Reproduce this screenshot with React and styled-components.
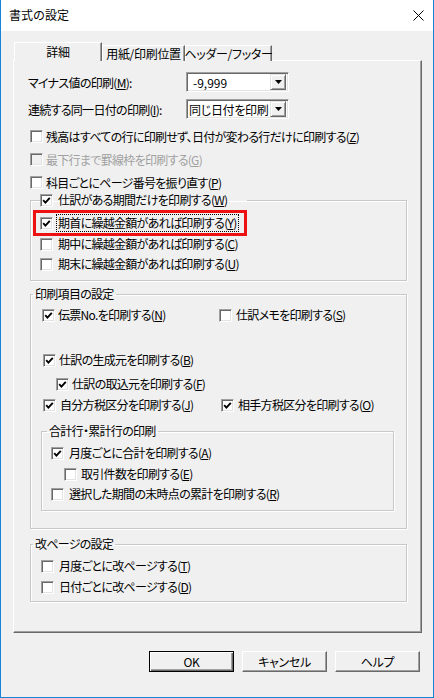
import React from "react";
import styled, { createGlobalStyle } from "styled-components";

const GlobalStyle = createGlobalStyle`
  html, body {
    margin: 0;
    padding: 0;
    background: #ffffff;
  }
  body {
    font-family: "Noto Sans CJK JP", "Noto Sans", sans-serif;
    font-size: 12px;
    color: #000;
  }
`;

const Window = styled.div`
  width: 434px;
  height: 698px;
  box-sizing: border-box;
  border: 1px solid #1883d7;
  border-top: none;
  display: flex;
  flex-direction: column;
  background: #f0f0f0;
`;

const TitleBar = styled.div`
  height: 31px;
  flex: none;
  background: #ffffff;
  display: flex;
  align-items: center;
  justify-content: space-between;
  padding: 0 8px;
`;

const Title = styled.span`
  font-size: 12px;
  line-height: 16px;
  margin-top: -1px;
`;

const CloseIcon = () => (
  <svg width="11" height="11" viewBox="0 0 11 11" style={{ marginRight: 1 }}>
    <path d="M0.5 0.5 L10.5 10.5 M10.5 0.5 L0.5 10.5" stroke="#000" strokeWidth="1" />
  </svg>
);

const Body = styled.div`
  flex: 1;
  display: flex;
  flex-direction: column;
  padding: 11px 11px 0 12px;
`;

const TabStrip = styled.div`
  display: flex;
  align-items: flex-end;
  padding-left: 1px;
  margin-bottom: -1px;
  position: relative;
  z-index: 1;
`;

const Tab = styled.div`
  box-sizing: border-box;
  width: ${(p) => p.$w}px;
  height: ${(p) => (p.$active ? 19 : 16)}px;
  background: #f0f0f0;
  border-top: 1px solid #ffffff;
  border-left: 1px solid #ffffff;
  border-right: 1px solid #696969;
  box-shadow: inset -1px 0 0 #a0a0a0;
  display: flex;
  align-items: ${(p) => (p.$active ? "flex-start" : "center")};
  justify-content: center;
  padding-top: ${(p) => (p.$active ? "1px" : "0")};
  font-size: 12px;
  line-height: 16px;
  white-space: nowrap;
  letter-spacing: -0.3px;
  font-feature-settings: "palt";
`;

const Panel = styled.div`
  flex: 1;
  box-sizing: border-box;
  border-top: 1px solid #ffffff;
  border-left: 1px solid #ffffff;
  border-right: 1px solid #696969;
  border-bottom: 1px solid #696969;
  box-shadow: inset -1px -1px 0 #a0a0a0;
  padding: 11px 14px 0 14px;
  display: flex;
  flex-direction: column;
  letter-spacing: -0.7px;
`;

const FieldRow = styled.div`
  display: flex;
  align-items: center;
  height: 20px;
  margin-top: ${(p) => p.$top || 0}px;
`;

const FieldLabel = styled.span`
  width: 158px;
  font-feature-settings: "palt";
  white-space: nowrap;
`;

const Combo = styled.div`
  box-sizing: border-box;
  width: 103px;
  height: 20px;
  background: #ffffff;
  border-top: 1px solid #a0a0a0;
  border-left: 1px solid #a0a0a0;
  border-right: 1px solid #ffffff;
  border-bottom: 1px solid #ffffff;
  box-shadow: inset 1px 1px 0 #696969, inset -1px -1px 0 #e3e3e3;
  display: flex;
  align-items: center;
  padding: 2px 2px 2px ${(p) => p.$pad}px;
`;

const ComboText = styled.span`
  flex: 1;
  white-space: nowrap;
  overflow: hidden;
  font-feature-settings: "palt";
  letter-spacing: ${(p) => (p.$num ? "0" : "-0.3px")};
`;

const ComboArrow = styled.div`
  box-sizing: border-box;
  width: 16px;
  height: 16px;
  background: #f0f0f0;
  border-top: 1px solid #e3e3e3;
  border-left: 1px solid #e3e3e3;
  border-right: 1px solid #696969;
  border-bottom: 1px solid #696969;
  box-shadow: inset 1px 1px 0 #ffffff, inset -1px -1px 0 #a0a0a0;
  display: flex;
  align-items: center;
  justify-content: center;
`;

const DownArrow = () => (
  <svg width="7" height="4" viewBox="0 0 7 4">
    <path d="M0 0 H7 L3.5 4 Z" fill="#000" />
  </svg>
);

const CheckList = styled.div`
  display: flex;
  flex-direction: column;
  gap: ${(p) => p.$gap || 0}px;
  margin-top: ${(p) => p.$top || 0}px;
  margin-left: ${(p) => p.$left || 0}px;
`;

const CheckRow = styled.label`
  display: flex;
  align-items: center;
  gap: ${(p) => p.$gap || 4}px;
  height: ${(p) => p.$h || 17}px;
  margin-top: ${(p) => p.$top || 0}px;
  margin-left: ${(p) => p.$indent || 0}px;
  color: ${(p) => (p.$disabled ? "#a0a0a0" : "#000")};
  white-space: nowrap;
  font-feature-settings: "palt";
  line-height: 16px;
`;

const Box = styled.span`
  box-sizing: border-box;
  flex: none;
  width: 13px;
  height: 13px;
  background: ${(p) => (p.$disabled ? "#f0f0f0" : "#ffffff")};
  border-top: 1px solid #a0a0a0;
  border-left: 1px solid #a0a0a0;
  border-right: 1px solid #ffffff;
  border-bottom: 1px solid #ffffff;
  box-shadow: inset 1px 1px 0 #696969, inset -1px -1px 0 #e3e3e3;
  display: flex;
  align-items: center;
  justify-content: center;
`;

const Tick = () => (
  <svg width="9" height="9" viewBox="0 0 9 9">
    <path d="M1.2 4.2 L3.4 6.6 L7.8 1.8" stroke="#000" strokeWidth="1.9" fill="none" />
  </svg>
);

const Focus = styled.span`
  display: inline-block;
  line-height: 16px;
  outline: 1px dotted #000;
  padding: 0 1px;
`;

const Mn = styled.u`
  text-underline-offset: 1px;
`;

const CheckBox = ({ checked, disabled, children, focus, ...rest }) => (
  <CheckRow $disabled={disabled} {...rest}>
    <Box $disabled={disabled}>{checked && <Tick />}</Box>
    {focus ? <Focus>{children}</Focus> : <span>{children}</span>}
  </CheckRow>
);

const Group = styled.fieldset`
  box-sizing: border-box;
  margin: ${(p) => p.$top || 0}px ${(p) => p.$right || 0}px 0 ${(p) => p.$left || 0}px;
  padding: 0 0 ${(p) => p.$bottom || 0}px ${(p) => p.$pad || 0}px;
  border: 1px solid #c8c8c8;
  box-shadow: 1px 1px 0 #ffffff, inset 1px 1px 0 #ffffff;
  min-width: 0;
`;

const Legend = styled.legend`
  padding: 0 ${(p) => p.$padR || 2}px 0 ${(p) => p.$padL ?? 2}px;
  line-height: 16px;
  height: 16px;
  font-feature-settings: "palt";
  white-space: nowrap;
  display: flex;
  align-items: center;
  gap: 5px;
`;

const Highlight = styled.div`
  box-sizing: border-box;
  width: 214px;
  height: 26px;
  margin: 2px 0 0 -7px;
  border: 3px solid #ee1111;
  padding-left: 4px;
  display: flex;
  align-items: center;
`;

const TwoCol = styled.div`
  display: grid;
  grid-template-columns: ${(p) => p.$first}px auto;
  margin-top: ${(p) => p.$top || 0}px;
  margin-left: ${(p) => p.$indent || 0}px;
`;

const ButtonBar = styled.div`
  height: 46px;
  flex: none;
  display: flex;
  justify-content: flex-end;
  align-items: flex-start;
  gap: 8px;
  padding: 18px 2px 0 0;
`;

const Button = styled.button`
  box-sizing: border-box;
  width: 85px;
  height: 21px;
  background: #f0f0f0;
  font-family: inherit;
  font-size: 12px;
  color: #000;
  padding: 0;
  border-top: 1px solid #ffffff;
  border-left: 1px solid #ffffff;
  border-right: 1px solid #696969;
  border-bottom: 1px solid #696969;
  box-shadow: inset -1px -1px 0 #a0a0a0;
  font-feature-settings: "palt";
  letter-spacing: -0.3px;
  ${(p) =>
    p.$default &&
    `
    border: 1px solid #000;
    box-shadow: inset 1px 1px 0 #ffffff, inset -1px -1px 0 #696969, inset -2px -2px 0 #a0a0a0;
  `}
`;

export default function App() {
  return (
    <>
      <GlobalStyle />
      <Window>
        <TitleBar>
          <Title>書式の設定</Title>
          <CloseIcon />
        </TitleBar>
        <Body>
          <TabStrip>
            <Tab $w={88} $active>詳細</Tab>
            <Tab $w={83}>用紙/印刷位置</Tab>
            <Tab $w={87}>ヘッダー/フッター</Tab>
          </TabStrip>
          <Panel>
            <FieldRow>
              <FieldLabel>
                マイナス値の印刷(<Mn>M</Mn>):
              </FieldLabel>
              <Combo $pad={6}>
                <ComboText $num>-9,999</ComboText>
                <ComboArrow>
                  <DownArrow />
                </ComboArrow>
              </Combo>
            </FieldRow>
            <FieldRow $top={7}>
              <FieldLabel>
                連続する同一日付の印刷(<Mn>I</Mn>):
              </FieldLabel>
              <Combo $pad={2}>
                <ComboText>同じ日付を印刷</ComboText>
                <ComboArrow>
                  <DownArrow />
                </ComboArrow>
              </Combo>
            </FieldRow>

            <CheckList $top={9} $gap={6} $left={2}>
              <CheckBox $gap={3}>
                残高はすべての行に印刷せず、日付が変わる行だけに印刷する(<Mn>Z</Mn>)
              </CheckBox>
              <CheckBox $gap={3} disabled>
                最下行まで罫線枠を印刷する(<Mn>G</Mn>)
              </CheckBox>
              <CheckBox $gap={3}>
                科目ごとにページ番号を振り直す(<Mn>P</Mn>)
              </CheckBox>
            </CheckList>

            <Group $top={1} $left={2} $pad={9} $bottom={6}>
              <Legend $padL={0} $padR={20}>
                <Box>
                  <Tick />
                </Box>
                <span>
                  仕訳がある期間だけを印刷する(<Mn>W</Mn>)
                </span>
              </Legend>
              <Highlight>
                <CheckBox checked focus $gap={4} $h={18}>
                  期首に繰越金額があれば印刷する(<Mn>Y</Mn>)
                </CheckBox>
              </Highlight>
              <CheckBox $gap={5} $h={20} $top={-2}>
                期中に繰越金額があれば印刷する(<Mn>C</Mn>)
              </CheckBox>
              <CheckBox $gap={5} $h={20}>
                期末に繰越金額があれば印刷する(<Mn>U</Mn>)
              </CheckBox>
            </Group>

            <Group $top={5} $left={2} $pad={2} $bottom={17}>
              <Legend>印刷項目の設定</Legend>
              <TwoCol $first={177} $top={3} $indent={9}>
                <CheckBox checked $gap={3} $h={20}>
                  伝票No.を印刷する(<Mn>N</Mn>)
                </CheckBox>
                <CheckBox $gap={4} $h={20}>
                  仕訳メモを印刷する(<Mn>S</Mn>)
                </CheckBox>
              </TwoCol>
              <CheckBox checked $gap={3} $h={20} $top={25} $indent={10}>
                仕訳の生成元を印刷する(<Mn>B</Mn>)
              </CheckBox>
              <CheckBox checked $gap={3} $h={20} $top={4} $indent={23}>
                仕訳の取込元を印刷する(<Mn>F</Mn>)
              </CheckBox>
              <TwoCol $first={178} $top={1} $indent={10}>
                <CheckBox checked $gap={4} $h={20}>
                  自分方税区分を印刷する(<Mn>J</Mn>)
                </CheckBox>
                <CheckBox checked $gap={4} $h={20}>
                  相手方税区分を印刷する(<Mn>O</Mn>)
                </CheckBox>
              </TwoCol>

              <Group $top={8} $left={8} $right={12} $pad={5} $bottom={6}>
                <Legend>合計行・累計行の印刷</Legend>
                <CheckBox checked $gap={5} $h={20} $top={4} $indent={4}>
                  月度ごとに合計を印刷する(<Mn>A</Mn>)
                </CheckBox>
                <CheckBox $gap={4} $h={20} $top={1} $indent={17}>
                  取引件数を印刷する(<Mn>E</Mn>)
                </CheckBox>
                <CheckBox $gap={5} $h={20} $indent={4}>
                  選択した期間の末時点の累計を印刷する(<Mn>R</Mn>)
                </CheckBox>
              </Group>
            </Group>

            <Group $top={7} $left={2} $pad={2} $bottom={4}>
              <Legend>改ページの設定</Legend>
              <CheckBox $gap={5} $h={20} $top={4} $indent={8}>
                月度ごとに改ページする(<Mn>T</Mn>)
              </CheckBox>
              <CheckBox $gap={5} $h={20} $top={1} $indent={8}>
                日付ごとに改ページする(<Mn>D</Mn>)
              </CheckBox>
            </Group>
          </Panel>
          <ButtonBar>
            <Button $default>OK</Button>
            <Button>キャンセル</Button>
            <Button>ヘルプ</Button>
          </ButtonBar>
        </Body>
      </Window>
    </>
  );
}
